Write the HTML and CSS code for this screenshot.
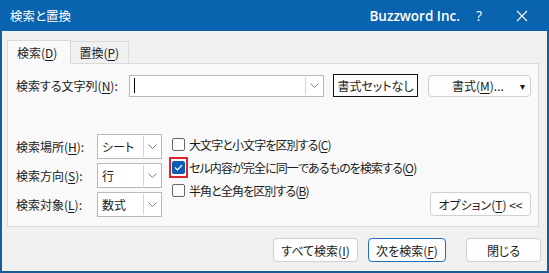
FILE: index.html
```html
<!DOCTYPE html>
<html lang="ja">
<head>
    <meta charset="UTF-8">
    <title>検索と置換</title>
    <link rel="stylesheet" href="styles.css">
</head>
<body>
    <div class="window">
        <div class="titlebar">
            <span class="title">検索と置換</span>
            <span class="brand">Buzzword Inc.</span>
            <span class="help">?</span>
            <span class="close">
                <svg width="12" height="12" viewBox="0 0 12 12"><path d="M1 1 L11 11 M11 1 L1 11" stroke="#fff" stroke-width="1.1" fill="none"/></svg>
            </span>
        </div>
        <div class="content">
            <div class="tabs">
                <div class="tab active">検索(<u>D</u>)</div>
                <div class="tab">置換(<u>P</u>)</div>
            </div>
            <div class="panel">
                <div class="find-row">
                    <label class="find-label">検索する文字列(<u>N</u>):</label>
                    <div class="combo find-combo">
                        <div class="combo-text"><span class="caret"></span></div>
                        <div class="combo-arrow">
                            <svg width="9" height="5" viewBox="0 0 9 5"><polyline points="0.5,0.5 4.5,4.5 8.5,0.5" stroke="#808080" fill="none"/></svg>
                        </div>
                    </div>
                    <button class="btn btn-plain">書式セットなし</button>
                    <button class="btn btn-format"><span>書式(<u>M</u>)...</span><span class="drop">▾</span></button>
                </div>
                <div class="options">
                    <div class="selects">
                        <div class="select-row">
                            <label>検索場所(<u>H</u>):</label>
                            <div class="combo small">
                                <div class="combo-text">シート</div>
                                <div class="combo-arrow"><svg width="9" height="5" viewBox="0 0 9 5"><polyline points="0.5,0.5 4.5,4.5 8.5,0.5" stroke="#808080" fill="none"/></svg></div>
                            </div>
                        </div>
                        <div class="select-row">
                            <label>検索方向(<u>S</u>):</label>
                            <div class="combo small">
                                <div class="combo-text">行</div>
                                <div class="combo-arrow"><svg width="9" height="5" viewBox="0 0 9 5"><polyline points="0.5,0.5 4.5,4.5 8.5,0.5" stroke="#808080" fill="none"/></svg></div>
                            </div>
                        </div>
                        <div class="select-row">
                            <label>検索対象(<u>L</u>):</label>
                            <div class="combo small">
                                <div class="combo-text">数式</div>
                                <div class="combo-arrow"><svg width="9" height="5" viewBox="0 0 9 5"><polyline points="0.5,0.5 4.5,4.5 8.5,0.5" stroke="#808080" fill="none"/></svg></div>
                            </div>
                        </div>
                    </div>
                    <div class="checks">
                        <div class="check-row">
                            <span class="box-wrap"><span class="box"></span></span>
                            <span class="check-text">大文字と小文字を区別する(<u>C</u>)</span>
                        </div>
                        <div class="check-row">
                            <span class="box-wrap marked"><span class="box checked">
                                <svg width="9" height="7" viewBox="0 0 9 7"><polyline points="1,3.5 3.5,6 8,1" stroke="#fff" stroke-width="1.2" fill="none"/></svg>
                            </span></span>
                            <span class="check-text">セル内容が完全に同一であるものを検索する(<u>O</u>)</span>
                        </div>
                        <div class="check-row">
                            <span class="box-wrap"><span class="box"></span></span>
                            <span class="check-text">半角と全角を区別する(<u>B</u>)</span>
                        </div>
                    </div>
                    <button class="btn btn-options">オプション(<u>T</u>) &lt;&lt;</button>
                </div>
            </div>
            <div class="actions">
                <button class="btn btn-all">すべて検索(<u>I</u>)</button>
                <button class="btn btn-next">次を検索(<u>F</u>)</button>
                <button class="btn btn-close">閉じる</button>
            </div>
        </div>
    </div>
</body>
</html>
```

FILE: styles.css
```css
body {
    margin: 0;
    font-family: "Noto Sans CJK JP", "Noto Sans", sans-serif;
    font-size: 12px;
    font-feature-settings: "palt";
    color: #1b1b1b;
    background: #f0f0f0;
    white-space: nowrap;
}

.window {
    width: 549px;
    height: 273px;
    box-sizing: border-box;
    border: 2px solid #1c5c96;
    border-top: none;
    display: flex;
    flex-direction: column;
    background: #f0f0f0;
}

.titlebar {
    height: 31px;
    margin: 0 -2px;
    background: #0a63ae;
    color: #fff;
    display: flex;
    align-items: center;
    padding: 0 0 0 10px;
}

.title {
    flex: 1;
    font-size: 12.5px;
}

.brand {
    font-family: "Open Sans", "Noto Sans", sans-serif;
    font-weight: 600;
    font-size: 13.5px;
}

.help {
    font-family: "Open Sans", sans-serif;
    font-size: 14px;
    margin-left: 16px;
}

.close {
    display: flex;
    margin-left: 34px;
    margin-right: 21px;
}

.content {
    flex: 1;
    display: flex;
    flex-direction: column;
    padding: 9px 8px 0 5px;
}

.tabs {
    display: flex;
    height: 23px;
    align-items: flex-end;
    position: relative;
    z-index: 1;
}

.tab {
    height: 22px;
    box-sizing: border-box;
    padding: 0 9px 0 8px;
    display: flex;
    align-items: center;
    border: 1px solid #dadada;
    border-bottom: none;
    border-left: none;
    background: #f0f0f0;
}

.tab.active {
    height: 24px;
    margin-bottom: -1px;
    background: #f9f9f9;
    border-left: 1px solid #dadada;
    padding: 0 13px 0 9px;
}

.panel {
    height: 164px;
    box-sizing: border-box;
    border: 1px solid #dadada;
    background: #f9f9f9;
    padding: 10px 7px 0 8px;
    display: flex;
    flex-direction: column;
}

u {
    text-decoration-thickness: 1px;
    text-underline-offset: 2px;
}

.find-row {
    display: flex;
    align-items: center;
    height: 23px;
}

.find-label {
    width: 113px;
}

.combo {
    display: flex;
    height: 22px;
    box-sizing: border-box;
    border: 1px solid #b9b9b9;
    background: #fff;
}

.combo-text {
    flex: 1;
    display: flex;
    align-items: center;
    padding-left: 4px;
}

.combo-arrow {
    width: 16px;
    border-left: 1px solid #d4d4d4;
    display: flex;
    align-items: center;
    justify-content: center;
    margin: 1px 1px 1px 0;
}

.find-combo {
    width: 196px;
}

.caret {
    width: 1px;
    height: 15px;
    background: #000;
}

.btn {
    font-family: inherit;
    font-size: 12px;
    font-feature-settings: "palt";
    color: #1b1b1b;
    background: #fdfdfd;
    border: 1px solid #d0d0d0;
    border-radius: 4px;
    height: 24px;
    padding: 0;
    display: flex;
    align-items: center;
    justify-content: center;
    flex-shrink: 0;
}

.btn-plain {
    margin-left: 9px;
    width: 85px;
    height: 23px;
    border: 1px solid #111;
    border-radius: 0;
}

.btn-format {
    margin-left: 10px;
    width: 103px;
    height: 22px;
    justify-content: flex-start;
    padding-left: 23px;
    box-sizing: border-box;
    position: relative;
}

.drop {
    position: absolute;
    right: 5px;
    font-size: 10px;
}

.options {
    display: flex;
    margin-top: 37px;
}

.selects {
    display: flex;
    flex-direction: column;
    gap: 4px;
    flex-shrink: 0;
}

.select-row {
    display: flex;
    align-items: center;
}

.select-row label {
    width: 81px;
}

.combo.small {
    width: 65px;
    height: 25px;
}

.checks {
    display: flex;
    flex-direction: column;
    margin-left: 7px;
    margin-top: -1px;
    flex-shrink: 0;
}

.check-row {
    display: flex;
    align-items: center;
    height: 23px;
}

.check-text {
    letter-spacing: -0.9px;
}

.box-wrap {
    width: 19px;
    height: 19px;
    box-sizing: border-box;
    display: flex;
    align-items: center;
    justify-content: center;
    margin-right: 1px;
    border: 2px solid transparent;
}

.box-wrap.marked {
    border-color: #d8262c;
    height: 21px;
}

.box {
    width: 13px;
    height: 13px;
    box-sizing: border-box;
    border: 1px solid #666;
    border-radius: 2px;
    background: #fcfcfc;
    display: flex;
    align-items: center;
    justify-content: center;
}

.box.checked {
    background: #0a5fb4;
    border-color: #0a5fb4;
}

.btn-options {
    margin-left: auto;
    align-self: flex-end;
    width: 101px;
    height: 24px;
    margin-bottom: 1px;
}

.actions {
    display: flex;
    justify-content: flex-end;
    margin-top: 11px;
    margin-right: -2px;
}

.btn-all {
    width: 85px;
}

.btn-next {
    width: 78px;
    margin-left: 10px;
    border-color: #1f6fbf;
}

.btn-close {
    width: 75px;
    margin-left: 20px;
}
```
